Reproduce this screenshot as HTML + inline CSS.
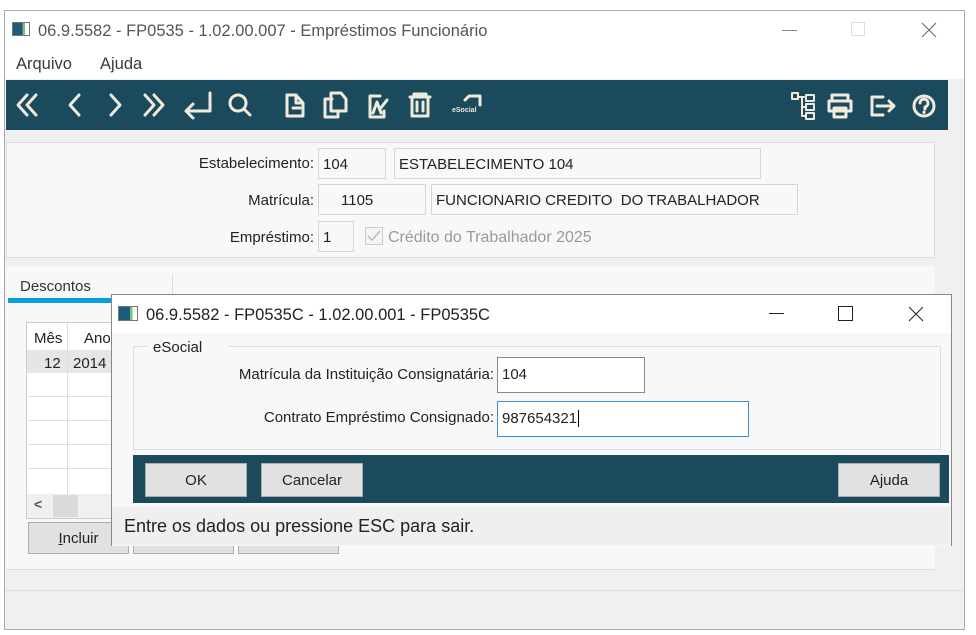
<!DOCTYPE html>
<html><head><meta charset="utf-8"><style>
*{box-sizing:border-box;margin:0;padding:0}
body{width:976px;height:635px;background:#fff;font-family:"Liberation Sans",sans-serif;position:relative;overflow:hidden;color:#222}
.a{position:absolute}
.inp{position:absolute;background:#f7f8fa;border:1px solid #d6d6d6;font-size:15px;padding:8px 4px 4px;line-height:16px;color:#222}
.lbl{position:absolute;font-size:15px;text-align:right;color:#222}
.btn{position:absolute;background:#e1e1e1;border:1px solid #adadad;font-size:15px;text-align:center;line-height:33px;color:#222}
svg{position:absolute}
</style></head><body>
<div class="a" style="left:4px;top:10px;width:961px;height:620px;border:1px solid #aaa;background:#f0f0f0"></div>
<div class="a" style="left:5px;top:11px;width:959px;height:68px;background:#fff"></div>
<div class="a" style="left:12px;top:22px;width:18px;height:14px;border:1px solid #777;background:linear-gradient(90deg,#1c5e7a 0 60%,#7bbf7a 60% 75%,#fff 75%)"></div>
<div class="a" style="left:38px;top:22px;font-size:16.5px;color:#555">06.9.5582 - FP0535 - 1.02.00.007 - Empréstimos Funcionário</div>
<div class="a" style="left:782px;top:30px;width:15px;height:1px;background:#888"></div>
<div class="a" style="left:851px;top:22px;width:14px;height:14px;border:1px solid #ddd"></div>
<svg style="left:921px;top:22px" width="16" height="16"><path d="M1 1L15 15M15 1L1 15" stroke="#666" stroke-width="1"/></svg>
<div class="a" style="left:16px;top:55px;font-size:16.5px;color:#3a3a3a">Arquivo</div>
<div class="a" style="left:100px;top:55px;font-size:16.5px;color:#3a3a3a">Ajuda</div>
<div class="a" style="left:6px;top:80px;width:942px;height:50px;background:#1a4a5c"></div>
<svg style="left:6px;top:80px" width="942" height="50" fill="none" stroke="#efeadb" stroke-width="3" stroke-linecap="round" stroke-linejoin="round">
<path d="M21 15L12 25L21 35M30 15L21 25L30 35"/>
<path d="M73 15L64 25L73 35"/>
<path d="M105 15L114 25L105 35"/>
<path d="M139 15L148 25L139 35M148 15L157 25L148 35"/>
<path d="M204 13V31H180M187 24L180 31L187 38"/>
<circle cx="232" cy="23" r="8"/><path d="M238 29L244 35"/>
<path d="M290 15H281V36H297V23L290 15V23H297M287 28H294"/>
<path d="M326 19H319V37H332V31M325 13H335L340 19V31H325Z"/>
<path d="M374 16H364V37H378V31M367 33L371 22L375 33M381 20L374 29"/>
<path d="M404 17H424M408 17V14H420V17M406 17V36H422V17M411 22V31M417 22V31"/>
<path d="M459 20L463 16H474V25"/>
<path d="M786 13h6v6h-6zM800 15h8v6h-8zM800 24h8v6h-8zM800 33h8v6h-8zM792 17h6M796 18V36M796 27H800M796 36H800" stroke-width="2"/>
<path d="M826 21V15H842V21M823 21H845V31H823ZM828 28H840V37H828Z"/>
<path d="M877 17H866V35H877M871 26H888M883 21L888 26L883 31"/>
<circle cx="918" cy="26" r="10"/><path d="M914 23a4 4 0 1 1 5 4v2M918 32v.5"/>
</svg>
<div class="a" style="left:452px;top:107px;font-size:7px;font-weight:bold;color:#efeadb">eSocial</div>
<div class="a" style="left:6px;top:142px;width:929px;height:116px;background:#f7f8fa;border:1px solid #dcdcdc"></div>
<div class="lbl" style="left:150px;top:155px;width:164px">Estabelecimento:</div>
<div class="inp" style="left:318px;top:148px;width:68px;height:31px">104</div>
<div class="inp" style="left:394px;top:148px;width:367px;height:31px">ESTABELECIMENTO 104</div>
<div class="lbl" style="left:150px;top:192px;width:164px">Matrícula:</div>
<div class="inp" style="left:318px;top:184px;width:108px;height:31px;padding-left:22px">1105</div>
<div class="inp" style="left:431px;top:184px;width:367px;height:31px">FUNCIONARIO CREDITO&nbsp; DO TRABALHADOR</div>
<div class="lbl" style="left:150px;top:229px;width:164px">Empréstimo:</div>
<div class="inp" style="left:318px;top:221px;width:36px;height:31px">1</div>
<div class="a" style="left:365px;top:227px;width:18px;height:18px;border:1px solid #ccc;background:#f4f4f4"></div>
<svg style="left:365px;top:227px" width="18" height="18"><path d="M3 9L7 13L15 4" stroke="#bbb" stroke-width="1.5" fill="none"/></svg>
<div class="a" style="left:388px;top:229px;font-size:16px;color:#999">Crédito do Trabalhador 2025</div>
<div class="a" style="left:6px;top:266px;width:929px;height:304px;background:#f7f8fa;border-bottom:1px solid #ddd"></div>
<div class="a" style="left:20px;top:278px;font-size:15px;color:#333">Descontos</div>
<div class="a" style="left:172px;top:274px;width:1px;height:22px;background:#ddd"></div>
<div class="a" style="left:8px;top:298px;width:110px;height:5px;background:#0a9ee0"></div>
<div class="a" style="left:26px;top:322px;width:100px;height:197px;border:1px solid #ccc;background:#fff"></div>
<div class="a" style="left:27px;top:350px;width:100px;height:23px;background:#e6e6e6"></div>
<div class="a" style="left:67px;top:323px;width:1px;height:171px;background:#ddd"></div>
<div class="a" style="left:34px;top:330px;font-size:15px">Mês</div>
<div class="a" style="left:84px;top:330px;font-size:15px">Ano</div>
<div class="a" style="left:44px;top:355px;font-size:15px">12</div>
<div class="a" style="left:73px;top:355px;font-size:15px">2014</div>
<div class="a" style="left:28px;top:396px;width:98px;height:1px;background:#ddd"></div>
<div class="a" style="left:28px;top:420px;width:98px;height:1px;background:#ddd"></div>
<div class="a" style="left:28px;top:444px;width:98px;height:1px;background:#ddd"></div>
<div class="a" style="left:28px;top:468px;width:98px;height:1px;background:#ddd"></div>
<div class="a" style="left:27px;top:494px;width:99px;height:24px;background:#f0f0f0"></div>
<div class="a" style="left:53px;top:495px;width:25px;height:22px;background:#dadada"></div>
<div class="a" style="left:34px;top:496px;font-size:14px;font-weight:bold;color:#555">&lt;</div>
<div class="btn" style="left:28px;top:522px;width:101px;height:32px;line-height:32px"><u>I</u>ncluir</div>
<div class="btn" style="left:133px;top:522px;width:101px;height:32px"></div>
<div class="btn" style="left:238px;top:522px;width:101px;height:32px"></div>
<div class="a" style="left:5px;top:590px;width:959px;height:1px;background:#ddd"></div>
<div class="a" style="left:111px;top:294px;width:841px;height:252px;border:1px solid #888;border-bottom:none;background:#f7f8fa"></div>
<div class="a" style="left:112px;top:295px;width:839px;height:38px;background:#fff"></div>
<div class="a" style="left:118px;top:306px;width:20px;height:15px;border:1px solid #777;background:linear-gradient(90deg,#1c5e7a 0 60%,#7bbf7a 60% 75%,#fff 75%)"></div>
<div class="a" style="left:146px;top:306px;font-size:16.5px;color:#222">06.9.5582 - FP0535C - 1.02.00.001 - FP0535C</div>
<div class="a" style="left:769px;top:313px;width:15px;height:1px;background:#222"></div>
<div class="a" style="left:838px;top:306px;width:15px;height:15px;border:1px solid #222"></div>
<svg style="left:908px;top:306px" width="16" height="16"><path d="M1 1L15 15M15 1L1 15" stroke="#222" stroke-width="1"/></svg>
<div class="a" style="left:133px;top:346px;width:808px;height:104px;border:1px solid #ddd"></div>
<div class="a" style="left:148px;top:340px;width:80px;height:14px;background:#f7f8fa;font-size:15px;padding-left:5px;line-height:16px;color:#222">eSocial</div>
<div class="lbl" style="left:180px;top:366px;width:314px">Matrícula da Instituição Consignatária:</div>
<div class="inp" style="left:497px;top:357px;width:148px;height:36px;background:#fff;border:1px solid #888;padding-top:9px">104</div>
<div class="lbl" style="left:180px;top:409px;width:314px">Contrato Empréstimo Consignado:</div>
<div class="inp" style="left:497px;top:401px;width:252px;height:36px;background:#fff;border:1px solid #3d8fd8;padding-top:9px">987654321<span style="border-left:1px solid #000;margin-left:1px"></span></div>
<div class="a" style="left:133px;top:455px;width:816px;height:48px;background:#1a4a5c"></div>
<div class="btn" style="left:145px;top:463px;width:102px;height:34px">OK</div>
<div class="btn" style="left:261px;top:463px;width:102px;height:34px">Cancelar</div>
<div class="btn" style="left:838px;top:463px;width:102px;height:34px">Ajuda</div>
<div class="a" style="left:112px;top:507px;width:838px;height:38px;background:#efefef"></div>
<div class="a" style="left:124px;top:516px;font-size:18px;color:#222">Entre os dados ou pressione ESC para sair.</div>
</body></html>
